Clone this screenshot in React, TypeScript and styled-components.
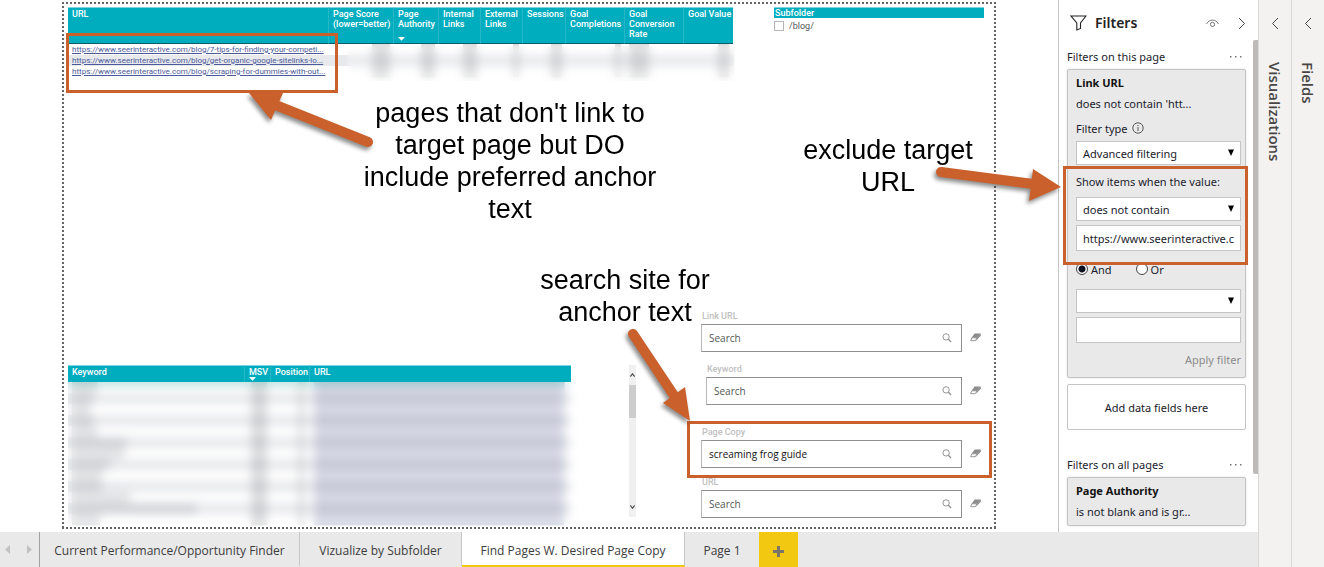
import React from "react";
import styled, { createGlobalStyle, css } from "styled-components";

const ui = `"Open Sans", "Noto Sans", sans-serif`;
const pane = `"Noto Sans", "Open Sans", sans-serif`;
const din = `Roboto, "Liberation Sans", sans-serif`;
const teal = "#00adbf";
const orange = "#ca602c";

const GlobalStyle = createGlobalStyle`
  *, *::before, *::after { box-sizing: border-box; }
  body { margin: 0; background: #fff; font-family: ${ui}; font-size: 11px; color: #1b1b2b; }
  button, input, select { font: inherit; color: inherit; border-radius: 0; }
  button { padding: 0; border: 0; background: none; cursor: pointer; }
`;

/* ---------- shell ---------- */

const Shell = styled.div`
  display: flex;
  min-height: 100vh;
`;

const Main = styled.div`
  flex: 1;
  min-width: 0;
  display: flex;
  flex-direction: column;
`;

const Workspace = styled.div`
  position: relative;
  flex: 1;
  display: flex;
`;

const CanvasArea = styled.main`
  flex: 1;
  min-width: 0;
  display: flex;
  padding: 2px 62px 3px;
`;

const dots = (dir: string) => `repeating-linear-gradient(${dir}, #666 0 2px, transparent 2px 4px)`;

const ReportPage = styled.section`
  flex: 1;
  min-width: 0;
  display: flex;
  flex-direction: column;
  justify-content: space-between;
  gap: 24px;
  padding: 5px 2px 4px 6px;
  background:
    ${dots("to right")} top / 100% 2px no-repeat,
    ${dots("to right")} bottom / 100% 2px no-repeat,
    ${dots("to bottom")} left / 2px 100% no-repeat,
    ${dots("to bottom")} right / 2px 100% no-repeat;
`;

/* ---------- report tables ---------- */

const TopRow = styled.div`
  display: flex;
  align-items: flex-start;
  gap: 41px;
  padding-right: 10px;
`;

const TableBox = styled.div`
  position: relative;
  flex: 1;
  min-width: 0;
`;

const DataTable = styled.table`
  width: 100%;
  table-layout: fixed;
  border-collapse: separate;
  border-spacing: 0;
  font-family: ${din};
`;

const Head = styled.th<{ $tall?: boolean }>`
  height: ${(p) => (p.$tall ? 37 : 17)}px;
  padding: 1px 0 0 4px;
  vertical-align: top;
  text-align: left;
  white-space: nowrap;
  overflow: hidden;
  font-size: 9px;
  line-height: 10px;
  font-weight: 500;
  color: #fff;
  background: ${teal};
  border-top: 1px solid #7fd6df;
  border-right: 1px solid #25b7c7;
  ${(p) => p.$tall && css`border-bottom: 1px solid #0b5d68;`}
  &:last-child { border-right: 0; }
`;

const SortMark = styled.svg<{ $gap?: number }>`
  display: block;
  margin-top: ${(p) => p.$gap ?? 0}px;
`;

const Row = styled.tr`
  height: 11px;
  &:nth-child(even) { background: #e8e9ec; }
`;

const Cell = styled.td<{ $right?: boolean }>`
  height: 11px;
  padding: 0 4px;
  line-height: 11px;
  font-size: 8px;
  white-space: nowrap;
  overflow: hidden;
  vertical-align: top;
  text-align: ${(p) => (p.$right ? "right" : "left")};
`;

const PageLink = styled.a`
  display: block;
  font-size: 8px;
  color: #4c5a9c;
`;

const Bar = styled.span<{ $tone?: string }>`
  display: inline-block;
  vertical-align: top;
  height: 11px;
  background: ${(p) => p.$tone ?? "rgba(90, 95, 100, 0.2)"};
`;

const Redaction = styled.div<{ $left: number; $top: number; $right: number; $height: number; $tint?: boolean }>`
  position: absolute;
  left: ${(p) => p.$left}px;
  top: ${(p) => p.$top}px;
  right: ${(p) => p.$right}px;
  height: ${(p) => p.$height}px;
  backdrop-filter: blur(5px);
  ${(p) => p.$tint && css`background: linear-gradient(rgba(0, 120, 120, 0.12), transparent 10px) 0 0 / calc(100% - 14px) 100% no-repeat;`}
`;

/* ---------- slicer ---------- */

const Slicer = styled.fieldset`
  width: 210px;
  margin: 0;
  padding: 0;
  border: 0;
  font-family: ${din};
`;

const SlicerTitle = styled.legend`
  width: 100%;
  padding: 0 1px;
  border-top: 1px solid #7fd6df;
  background: ${teal};
  color: #fff;
  font-size: 9px;
  line-height: 10px;
  font-weight: 500;
`;

const SlicerOption = styled.label`
  display: flex;
  align-items: center;
  gap: 5px;
  height: 16px;
  font-size: 9px;
  color: #555;
`;

const TickBox = styled.input`
  appearance: none;
  width: 10px;
  height: 10px;
  margin: 0;
  border: 1px solid #b5b5b5;
  background: #fff;
`;

/* ---------- lower half ---------- */

const BottomRow = styled.div`
  display: flex;
  align-items: flex-end;
  padding-right: 13px;
`;

const ScrollBar = styled.div`
  display: flex;
  flex-direction: column;
  align-items: center;
  justify-content: space-between;
  width: 7px;
  height: 152px;
  margin: 0 65px 8px 58px;
  padding: 8px 0;
  background: linear-gradient(#cdcdcd, #cdcdcd) 0 20px / 7px 33px no-repeat #f0f0f0;
`;

const Searches = styled.div`
  width: 280px;
  padding-bottom: 7px;
`;

const Field = styled.div<{ $before?: number; $indent?: number }>`
  margin-top: ${(p) => p.$before ?? 0}px;
  padding-left: ${(p) => p.$indent ?? 0}px;
`;

const FieldLabel = styled.label`
  display: block;
  height: 14px;
  padding-left: 1px;
  line-height: 12px;
  font-family: ${din};
  font-size: 9px;
  font-weight: 500;
  color: #c0c0c0;
`;

const FieldLine = styled.div`
  display: flex;
  align-items: center;
  gap: 8px;
`;

const SearchBox = styled.div`
  flex: 1;
  min-width: 0;
  display: flex;
  align-items: center;
  height: 28px;
  padding: 0 9px 0 7px;
  border: 1px solid #8f8f8f;
  border-left-color: #b8b8b8;
  background: #fff;
`;

const SearchInput = styled.input`
  flex: 1;
  min-width: 0;
  padding: 0;
  border: 0;
  outline: 0;
  background: none;
  font-size: 10px;
  color: #111;
  &::placeholder { color: #555; opacity: 1; }
`;

const IconButton = styled.button`
  display: flex;
  align-items: center;
  justify-content: center;
`;

/* ---------- filters pane ---------- */

const Pane = styled.aside`
  display: flex;
  width: 200px;
  border-left: 1px solid #c4c4c4;
  padding-left: 8px;
  background: #fff;
  font-family: ${pane};
`;

const PaneBody = styled.div`
  flex: 1;
  min-width: 0;
  padding-bottom: 6px;
`;

const PaneScroll = styled.div`
  width: 5px;
  height: 434px;
  margin: 40px 0 0 7px;
  background: #bdbbb9;
  border-radius: 2px 0 0 2px;
`;

const PaneHeader = styled.header`
  display: flex;
  align-items: center;
  height: 46px;
  padding-left: 3px;
`;

const PaneTitle = styled.h2`
  flex: 1;
  margin: 0 0 0 8px;
  font-size: 14px;
  line-height: 20px;
  font-weight: 600;
  color: #222;
`;

const Chevron = styled(IconButton)`
  width: 8px;
  margin-left: 19px;
`;

const SectionRow = styled.div<{ $before?: number }>`
  display: flex;
  align-items: center;
  justify-content: space-between;
  height: 23px;
  margin-top: ${(p) => p.$before ?? 0}px;
  padding: 0 4px 2px 0;
`;

const SectionTitle = styled.h3`
  margin: 0;
  font-size: 11px;
  font-weight: 400;
  white-space: nowrap;
`;

const Card = styled.div<{ $end: number }>`
  padding: 0 4px ${(p) => p.$end}px 8px;
  border: 1px solid #c4c4c4;
  border-radius: 2px;
  background: #e9e9e9;
  box-shadow: 0 0 2px rgba(0, 0, 0, 0.15);
`;

const CardTitle = styled.h4`
  margin: 0;
  font-size: 11px;
  line-height: 26px;
  font-weight: 700;
  color: #111;
`;

const Line = styled.div<{ $before?: number }>`
  display: flex;
  align-items: center;
  gap: 4px;
  height: 16px;
  margin-top: ${(p) => p.$before ?? 0}px;
  padding-bottom: 2px;
  white-space: nowrap;
`;

const SelectBox = styled.div<{ $before: number }>`
  position: relative;
  margin-top: ${(p) => p.$before}px;
  svg { position: absolute; right: 6px; top: 8px; pointer-events: none; }
`;

const Select = styled.select`
  appearance: none;
  display: block;
  width: 100%;
  height: 24px;
  padding: 0 20px 0 6px;
  border: 1px solid #c4c4c4;
  background: #fff;
`;

const TextInput = styled.input`
  display: block;
  width: 100%;
  height: 26px;
  margin-top: 4px;
  padding: 0 6px;
  border: 1px solid #c4c4c4;
  background: #fff;
`;

const RadioLine = styled.div`
  display: flex;
  gap: 24px;
  height: 16px;
  margin: 10px 0 12px;
`;

const RadioLabel = styled.label`
  display: flex;
  align-items: center;
  gap: 3px;
`;

const Radio = styled.input`
  appearance: none;
  width: 12px;
  height: 12px;
  margin: 0;
  border: 1px solid #444;
  border-radius: 50%;
  background: #fff;
  &:checked { background: radial-gradient(circle, #0b1020 0 3px, #fff 4px); }
`;

const Apply = styled.button`
  display: block;
  margin: 9px 0 0 auto;
  height: 16px;
  line-height: 16px;
  color: #8b8b8b;
`;

const DropZone = styled.button`
  display: block;
  width: 100%;
  height: 46px;
  margin-top: 6px;
  border: 1px solid #c4c4c4;
  border-radius: 2px;
  background: #fff;
`;

/* ---------- collapsed panes ---------- */

const Rail = styled.aside`
  display: flex;
  flex-direction: column;
  align-items: center;
  width: 33px;
  border-left: 1px solid #d9d8d6;
  background: #f3f2f1;
`;

const RailToggle = styled(IconButton)`
  width: 32px;
  height: 46px;
`;

const RailTitle = styled.h2`
  margin: 16px 0 0;
  writing-mode: vertical-rl;
  font-size: 15px;
  line-height: 20px;
  font-weight: 600;
  color: #484644;
`;

/* ---------- page tabs ---------- */

const TabBar = styled.nav`
  display: flex;
  height: 35px;
  background: #e9e9e9;
`;

const TabNav = styled.div`
  display: flex;
  align-items: center;
  justify-content: space-between;
  width: 40px;
  padding: 0 7px 0 5px;
  border-right: 1px solid #a0a0a0;
`;

const Tab = styled.button<{ $width: number; $on?: boolean; $last?: boolean }>`
  width: ${(p) => p.$width}px;
  padding-top: 3px;
  border-right: ${(p) => (p.$last ? 0 : 1)}px solid #c6c6c6;
  border-bottom: 2px solid ${(p) => (p.$on ? "#f2c811" : "transparent")};
  background: ${(p) => (p.$on ? "#fff" : "transparent")};
  font-size: 12px;
  white-space: nowrap;
  color: #3c3c3c;
`;

const AddTab = styled(IconButton)`
  width: 39px;
  padding-top: 3px;
  background: #f2c811;
`;

/* ---------- annotations ---------- */

const Arrows = styled.svg`
  position: absolute;
  left: 0;
  top: 0;
  width: 100%;
  height: 100%;
  pointer-events: none;
  filter: drop-shadow(-2px 3px 2px rgba(0, 0, 0, 0.45));
`;

const Callout = styled.div<{ $x: number; $y: number; $w: number; $h: number }>`
  position: absolute;
  left: ${(p) => p.$x}px;
  top: ${(p) => p.$y}px;
  width: ${(p) => p.$w}px;
  height: ${(p) => p.$h}px;
  border: 3px solid ${orange};
  pointer-events: none;
`;

const Note = styled.p<{ $x: number; $y: number; $w: number }>`
  position: absolute;
  left: ${(p) => p.$x}px;
  top: ${(p) => p.$y}px;
  width: ${(p) => p.$w}px;
  margin: 0;
  text-align: center;
  font-family: "Liberation Sans", Arial, sans-serif;
  font-size: 27px;
  line-height: 32px;
  color: #000;
  pointer-events: none;
`;

/* ---------- icons ---------- */

const Down = () => (
  <svg width="8" height="8" viewBox="0 0 8 8"><path d="M1 0.5h6L4 7z" fill="#000" /></svg>
);

const Caret = ({ gap }: { gap?: number }) => (
  <SortMark $gap={gap} width="7" height="4" viewBox="0 0 7 4"><path d="M0 0h7L3.5 3.8z" fill="#fff" /></SortMark>
);

const Magnifier = () => (
  <svg width="10" height="10" viewBox="0 0 11 11" fill="none" stroke="#8a8a8a">
    <circle cx="4.5" cy="4.3" r="3.5" />
    <path d="M7 6.9l3 3" strokeWidth="1.3" />
  </svg>
);

const Eraser = () => (
  <svg width="11" height="10" viewBox="0 0 11 10">
    <path d="M4.6 0.4h6.2L7.4 4.8H1.6z" fill="#8c8c8c" />
    <path d="M1.8 4.8h5.2L5.4 7.7H0.6z" fill="#fff" stroke="#8c8c8c" strokeWidth="0.9" />
    <path d="M10.8 0.4v2.4L5.8 8.1l1.4-3.3z" fill="#8c8c8c" />
  </svg>
);

const ChevronIcon = ({ left }: { left?: boolean }) => (
  <svg width="8" height="13" viewBox="0 0 8 13" fill="none" stroke="#444">
    <path d={left ? "M7 1L1.5 6.5 7 12" : "M1 1l5.5 5.5L1 12"} />
  </svg>
);

const Ellipsis = () => (
  <svg width="12" height="2" viewBox="0 0 12 2" fill="#777">
    <rect x="0" width="1.5" height="1.5" /><rect x="5" width="1.5" height="1.5" /><rect x="10" width="1.5" height="1.5" />
  </svg>
);

/* ---------- data ---------- */

const links = [
  "https://www.seerinteractive.com/blog/7-tips-for-finding-your-competi...",
  "https://www.seerinteractive.com/blog/get-organic-google-sitelinks-lo...",
  "https://www.seerinteractive.com/blog/scraping-for-dummies-with-out...",
];

const metrics = [
  { head: ["Page Score", "(lower=better)"], width: 65, bar: 18 },
  { head: ["Page", "Authority"], width: 45, bar: 14, sorted: true },
  { head: ["Internal", "Links"], width: 42, bar: 14 },
  { head: ["External", "Links"], width: 42, bar: 6 },
  { head: ["Sessions"], width: 43, bar: 11 },
  { head: ["Goal", "Completions"], width: 59, bar: 6 },
  { head: ["Goal", "Conversion", "Rate"], width: 59, bar: 20, inset: 32 },
  { head: ["Goal Value"], width: 49, bar: 11 },
];

const keywordBars = [25, 22, 18, 22, 25, 55, 52, 38, 30, 30, 58, 125, 28];

const searches = [
  { id: "link-url", label: "Link URL" },
  { id: "keyword", label: "Keyword", before: 11, indent: 5 },
  { id: "page-copy", label: "Page Copy", before: 21, value: "screaming frog guide" },
  { id: "url", label: "URL", before: 8 },
];

const tabs = [
  { name: "Current Performance/Opportunity Finder", width: 260 },
  { name: "Vizualize by Subfolder", width: 162 },
  { name: "Find Pages W. Desired Page Copy", width: 223, on: true },
  { name: "Page 1", width: 74, last: true },
];

/* ---------- parts ---------- */

const LinkTable = () => (
  <TableBox>
    <DataTable>
      <colgroup>
        <col />
        {metrics.map((m) => <col key={m.head.join()} width={m.width} />)}
      </colgroup>
      <thead>
        <tr>
          <Head $tall>URL</Head>
          {metrics.map((m) => (
            <Head $tall key={m.head.join()}>
              {m.head.map((t) => <div key={t}>{t}</div>)}
              {m.sorted && <Caret gap={8} />}
            </Head>
          ))}
        </tr>
      </thead>
      <tbody>
        {links.map((l) => (
          <Row key={l}>
            <Cell><PageLink href="#">{l}</PageLink></Cell>
            {metrics.map((m) => (
              <Cell $right key={m.head.join()}>
                <Bar style={{ width: m.bar, marginRight: m.inset ?? 0 }} />
              </Cell>
            ))}
          </Row>
        ))}
      </tbody>
    </DataTable>
    <Redaction $left={279} $top={39} $right={-2} $height={35} />
  </TableBox>
);

const KeywordTable = () => (
  <TableBox>
    <DataTable>
      <colgroup>
        <col width="177" /><col width="26" /><col width="39" /><col />
      </colgroup>
      <thead>
        <tr>
          <Head>Keyword</Head>
          <Head>MSV<Caret /></Head>
          <Head>Position</Head>
          <Head>URL</Head>
        </tr>
      </thead>
      <tbody>
        {keywordBars.map((w, i) => (
          <Row key={i}>
            <Cell><Bar style={{ width: w }} $tone="rgba(90, 95, 100, 0.16)" /></Cell>
            <Cell $right><Bar style={{ width: 16 }} /></Cell>
            <Cell $right><Bar $tone="rgba(90, 95, 100, 0.12)" style={{ width: 9 }} /></Cell>
            <Cell><Bar $tone="rgba(100, 108, 155, 0.26)" style={{ width: "99%" }} /></Cell>
          </Row>
        ))}
      </tbody>
    </DataTable>
    <Redaction $left={0} $top={17} $right={-8} $height={144} $tint />
  </TableBox>
);

const FiltersPane = () => (
  <Pane>
    <PaneBody>
      <PaneHeader>
        <svg width="17" height="16" viewBox="0 0 17 16" fill="none" stroke="#222" strokeWidth="1.1">
          <path d="M1 1h15L10.5 8v5.5L6.8 15V8z" />
        </svg>
        <PaneTitle>Filters</PaneTitle>
        <IconButton aria-label="Show filters to readers">
          <svg width="13" height="9" viewBox="0 0 13 9" fill="none" stroke="#666" strokeWidth="0.9">
            <path d="M0.6 5C3 -0.2 10 -0.2 12.4 5" />
            <circle cx="6.5" cy="5.4" r="2.1" />
          </svg>
        </IconButton>
        <Chevron aria-label="Collapse filters"><ChevronIcon /></Chevron>
      </PaneHeader>

      <SectionRow>
        <SectionTitle>Filters on this page</SectionTitle>
        <IconButton aria-label="More options for this page"><Ellipsis /></IconButton>
      </SectionRow>
      <Card $end={9}>
        <CardTitle>Link URL</CardTitle>
        <Line>does not contain 'htt...</Line>
        <Line $before={9} as="label" htmlFor="filter-type">
          Filter type
          <svg width="12" height="12" viewBox="0 0 12 12" fill="none" stroke="#444" strokeWidth="0.9">
            <circle cx="6" cy="6" r="5.2" />
            <path d="M6 5v4M6 3v1.1" />
          </svg>
        </Line>
        <SelectBox $before={4}>
          <Select id="filter-type"><option>Advanced filtering</option></Select>
          <Down />
        </SelectBox>
        <Line $before={9} as="label" htmlFor="condition-1">Show items when the value:</Line>
        <SelectBox $before={7}>
          <Select id="condition-1"><option>does not contain</option></Select>
          <Down />
        </SelectBox>
        <TextInput aria-label="First value" defaultValue="https://www.seerinteractive.com/" />
        <RadioLine>
          <RadioLabel><Radio type="radio" name="join" defaultChecked />And</RadioLabel>
          <RadioLabel><Radio type="radio" name="join" />Or</RadioLabel>
        </RadioLine>
        <SelectBox $before={0}>
          <Select aria-label="Second condition"><option></option></Select>
          <Down />
        </SelectBox>
        <TextInput aria-label="Second value" />
        <Apply>Apply filter</Apply>
      </Card>
      <DropZone>Add data fields here</DropZone>

      <SectionRow $before={24}>
        <SectionTitle>Filters on all pages</SectionTitle>
        <IconButton aria-label="More options for all pages"><Ellipsis /></IconButton>
      </SectionRow>
      <Card $end={5}>
        <CardTitle>Page Authority</CardTitle>
        <Line>is not blank and is gr...</Line>
      </Card>
    </PaneBody>
    <PaneScroll />
  </Pane>
);

export default function App() {
  return (
    <>
      <GlobalStyle />
      <Shell>
        <Main>
          <Workspace>
            <CanvasArea>
              <ReportPage>
                <TopRow>
                  <LinkTable />
                  <Slicer>
                    <SlicerTitle>Subfolder</SlicerTitle>
                    <SlicerOption><TickBox type="checkbox" />/blog/</SlicerOption>
                  </Slicer>
                </TopRow>
                <BottomRow>
                  <KeywordTable />
                  <ScrollBar>
                    <svg width="5" height="4" viewBox="0 0 5 4" fill="none" stroke="#505050" strokeWidth="1.2"><path d="M0.3 3.5L2.5 0.8l2.2 2.7" /></svg>
                    <svg width="5" height="4" viewBox="0 0 5 4" fill="none" stroke="#505050" strokeWidth="1.2"><path d="M0.3 0.5l2.2 2.7L4.7 0.5" /></svg>
                  </ScrollBar>
                  <Searches>
                    {searches.map((s) => (
                      <Field key={s.id} $before={s.before} $indent={s.indent}>
                        <FieldLabel htmlFor={s.id}>{s.label}</FieldLabel>
                        <FieldLine>
                          <SearchBox>
                            <SearchInput id={s.id} placeholder="Search" defaultValue={s.value} />
                            <IconButton aria-label={`Search ${s.label}`}><Magnifier /></IconButton>
                          </SearchBox>
                          <IconButton aria-label={`Clear ${s.label}`}><Eraser /></IconButton>
                        </FieldLine>
                      </Field>
                    ))}
                  </Searches>
                </BottomRow>
              </ReportPage>
            </CanvasArea>
            <FiltersPane />

            <Callout $x={66} $y={33} $w={272} $h={60} />
            <Callout $x={1063} $y={166} $w={185} $h={99} />
            <Callout $x={687} $y={421} $w={305} $h={57} />
            <Arrows fill={orange} stroke={orange}>
              <path d="M368 142L278 106M941 172l92 12M633 334l44 66" strokeWidth="10" strokeLinecap="round" fill="none" />
              <path d="M249 93h34l-12 27zM1061 187l-28-18-4 32zM690 421l-5-34-22 16z" stroke="none" />
            </Arrows>
            <Note $x={350} $y={97} $w={320}>pages that don't link to<br />target page but DO<br />include preferred anchor<br />text</Note>
            <Note $x={788} $y={134} $w={200}>exclude target<br />URL</Note>
            <Note $x={525} $y={264} $w={200}>search site for<br />anchor text</Note>
          </Workspace>
          <TabBar>
            <TabNav>
              <IconButton aria-label="Previous pages"><svg width="5" height="9" viewBox="0 0 5 9"><path d="M5 0v9L0 4.5z" fill="#c2c2c2" /></svg></IconButton>
              <IconButton aria-label="Next pages"><svg width="5" height="9" viewBox="0 0 5 9"><path d="M0 0v9l5-4.5z" fill="#c2c2c2" /></svg></IconButton>
            </TabNav>
            {tabs.map((t) => <Tab key={t.name} $width={t.width} $on={t.on} $last={t.last}>{t.name}</Tab>)}
            <AddTab aria-label="New page">
              <svg width="11" height="11" viewBox="0 0 11 11"><path d="M5.5 0v11M0 5.5h11" stroke="#7a7566" strokeWidth="3" /></svg>
            </AddTab>
          </TabBar>
        </Main>
        <Rail>
          <RailToggle aria-label="Expand visualizations"><ChevronIcon left /></RailToggle>
          <RailTitle>Visualizations</RailTitle>
        </Rail>
        <Rail>
          <RailToggle aria-label="Expand fields"><ChevronIcon left /></RailToggle>
          <RailTitle>Fields</RailTitle>
        </Rail>
      </Shell>
    </>
  );
}
